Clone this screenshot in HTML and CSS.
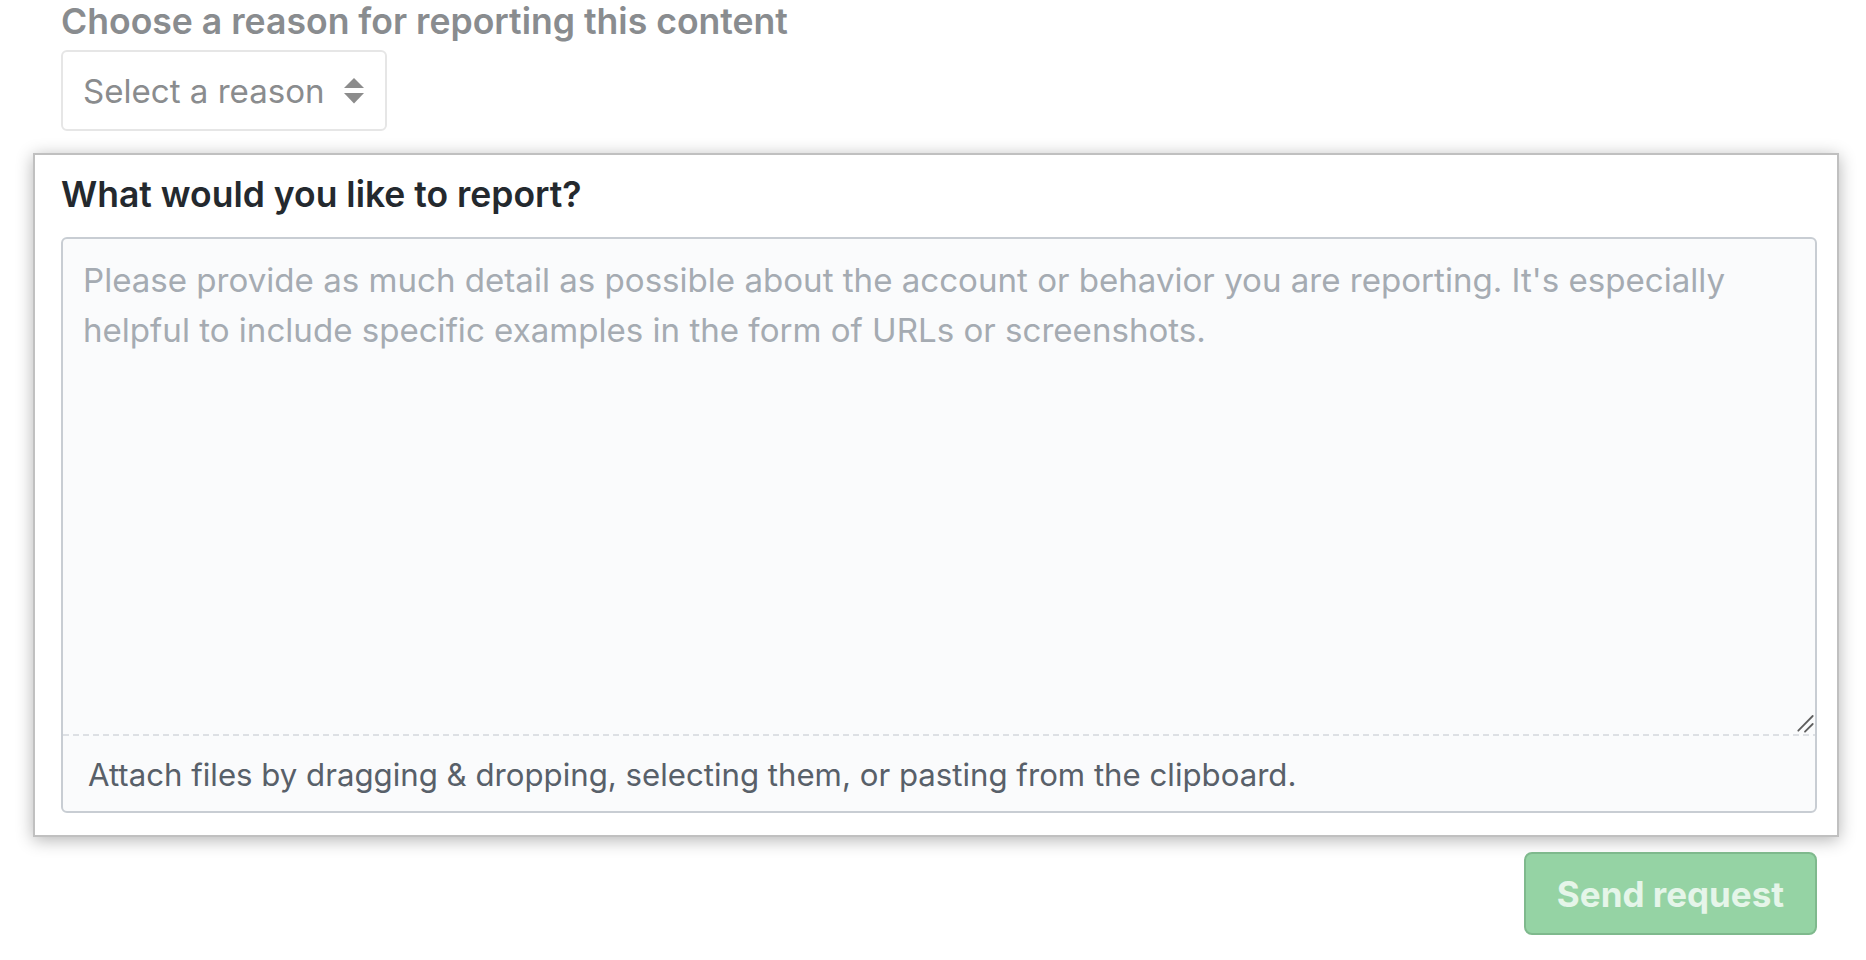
FILE: index.html
```html
<!DOCTYPE html>
<html lang="en">
<head>
<meta charset="utf-8">
<title>Report content</title>
<link rel="stylesheet" href="styles.css">
</head>
<body>
<main class="page">
  <section class="reason">
    <h3 class="reason-title">Choose a reason for reporting this content</h3>
    <div class="select" role="button">
      <span class="select-label">Select a reason</span>
      <svg class="select-arrows" width="20" height="26" viewBox="0 0 20 26" aria-hidden="true">
        <polygon points="10,0 20,10 0,10" fill="#8c8c8c"/>
        <polygon points="0,15 20,15 10,25.5" fill="#8c8c8c"/>
      </svg>
    </div>
  </section>

  <section class="card">
    <h4 class="card-title">What would you like to report?</h4>
    <div class="editor">
      <div class="editor-body">
        <textarea class="editor-input" placeholder="Please provide as much detail as possible about the account or behavior you are reporting. It's especially helpful to include specific examples in the form of URLs or screenshots."></textarea>
        <svg class="editor-resizer" width="20" height="20" viewBox="0 0 20 20" aria-hidden="true">
          <line x1="3.3" y1="16.7" x2="17.7" y2="2" stroke="#5f5f5f" stroke-width="1.8" stroke-linecap="round"/>
          <line x1="10" y1="17.7" x2="17.7" y2="10" stroke="#5f5f5f" stroke-width="1.8" stroke-linecap="round"/>
        </svg>
      </div>
      <div class="editor-footer">Attach files by dragging &amp; dropping, selecting them, or pasting from the clipboard.</div>
    </div>
  </section>

  <div class="actions">
    <button class="btn-send" type="button" disabled>Send request</button>
  </div>
</main>
</body>
</html>
```

FILE: styles.css
```css
* { box-sizing: border-box; }

html, body {
  margin: 0;
  padding: 0;
  background: #ffffff;
}

body {
  font-family: "Inter", "Roboto", "Liberation Sans", sans-serif;
  color: #24292e;
}

.page {
  padding: 0 27px 0 33px;
}

.reason {
  padding-left: 28px;
}

.reason-title {
  margin: 0;
  padding-top: 1px;
  font-size: 35.6px;
  line-height: 42px;
  font-weight: 600;
  color: #898c8f;
}

.select {
  margin-top: 7px;
  width: 326px;
  height: 81px;
  border: 2px solid #e6e6e6;
  border-radius: 6px;
  padding: 0 21px 0 20px;
  display: flex;
  align-items: center;
  justify-content: space-between;
  background: #ffffff;
}

.select-label {
  font-size: 33.1px;
  color: #8a8c8e;
}

.select-arrows {
  display: block;
}

.card {
  margin-top: 22px;
  background: #ffffff;
  border: 2px solid #c0c0c0;
  box-shadow: 0 3px 16px rgba(0, 0, 0, 0.3);
  padding: 20px 20px 22px 26px;
}

.card-title {
  margin: 0;
  font-size: 35.5px;
  line-height: 40px;
  font-weight: 600;
  color: #24292e;
}

.editor {
  margin-top: 22px;
  border: 2px solid #c8cdd3;
  border-radius: 6px;
  background: #fafbfc;
  overflow: hidden;
}

.editor-body {
  position: relative;
}

.editor-input {
  display: block;
  width: 100%;
  height: 495px;
  margin: 0;
  border: 0;
  outline: none;
  background: transparent;
  resize: none;
  padding: 16px 20px;
  font-family: "Inter", "Roboto", "Liberation Sans", sans-serif;
  font-size: 33.1px;
  line-height: 50px;
  color: #24292e;
}

.editor-input::placeholder {
  color: #a5abb2;
}

.editor-resizer {
  position: absolute;
  right: 0;
  bottom: 0;
  display: block;
}

.editor-footer {
  background-image: repeating-linear-gradient(to right, #dde0e4 0 6px, transparent 6px 10px);
  background-size: 100% 2px;
  background-repeat: no-repeat;
  background-position: top left;
  padding: 23px 25px 18px;
  font-size: 31.2px;
  line-height: 36px;
  color: #586069;
}

.actions {
  display: flex;
  justify-content: flex-end;
  padding-right: 22px;
  margin-top: 15px;
}

.btn-send {
  width: 293px;
  height: 83px;
  border: 2px solid #7fb98d;
  border-radius: 8px;
  background: #95d3a4;
  color: #e5f5e9;
  font-family: "Inter", "Roboto", "Liberation Sans", sans-serif;
  font-size: 35px;
  font-weight: 700;
  padding: 0;
  cursor: default;
}
```
